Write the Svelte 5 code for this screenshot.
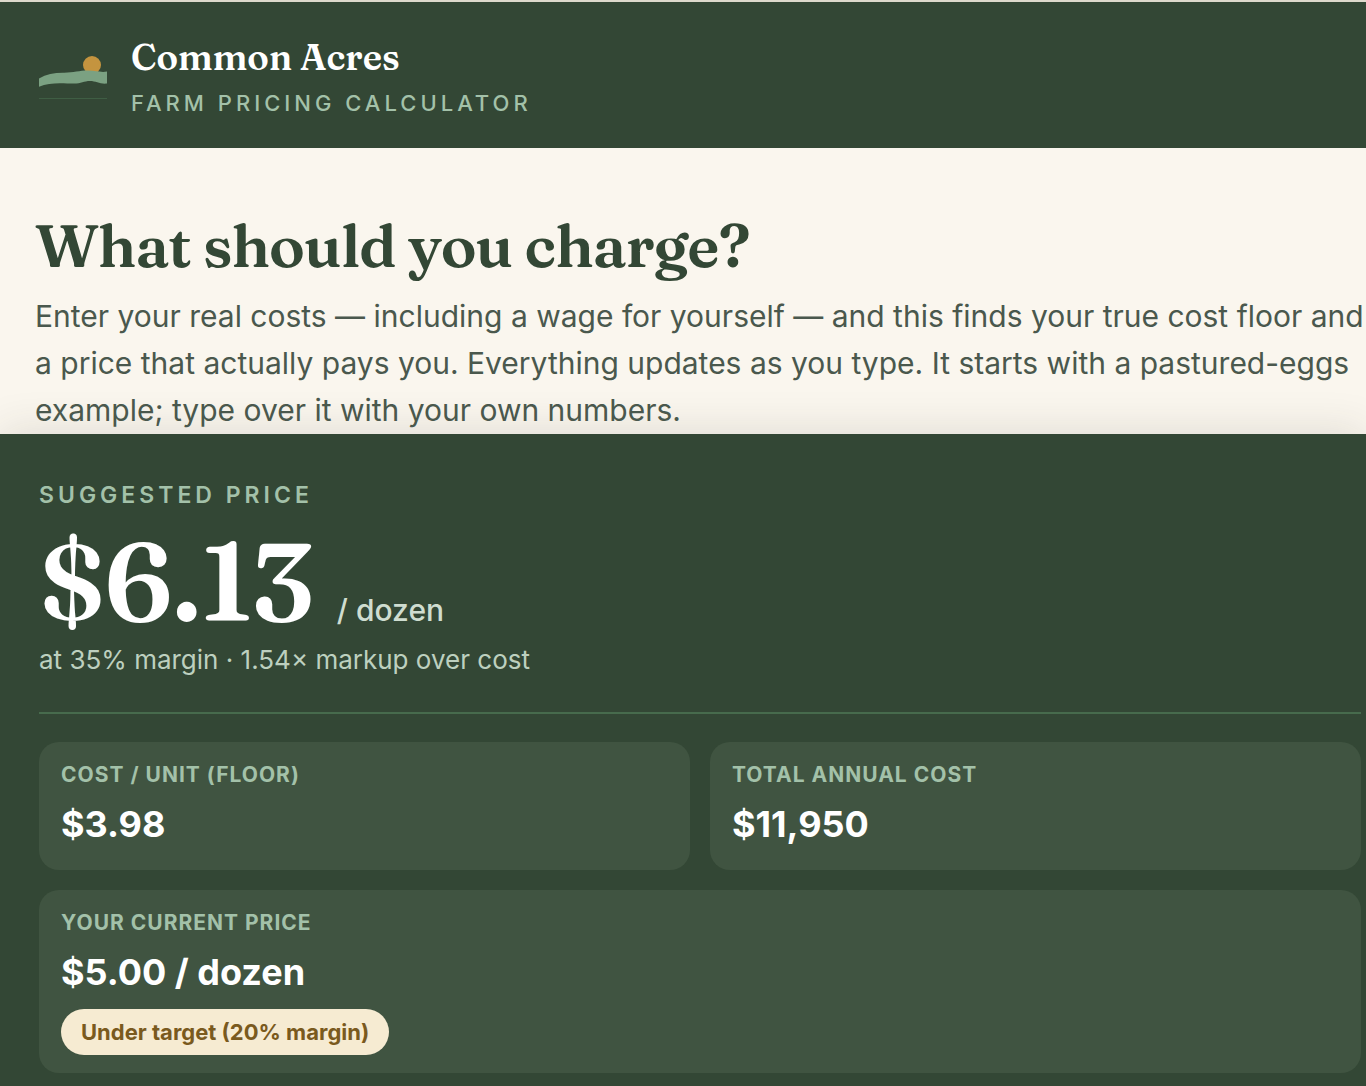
<script>
    let unit = $state('dozen');
    let unitCost = $state(3.98333);
    let annualCost = $state(11950);
    let margin = $state(35);
    let currentPrice = $state(5);

    let suggested = $derived(unitCost / (1 - margin / 100));
    let markup = $derived(suggested / unitCost);
    let currentMargin = $derived(Math.round((1 - unitCost / currentPrice) * 100));

    function money(value, digits = 2) {
        return '$' + value.toLocaleString('en-US', {
            minimumFractionDigits: digits,
            maximumFractionDigits: digits
        });
    }
</script>

<div class="page">
    <header class="topbar">
        <svg class="logo" viewBox="0 0 68 68" aria-hidden="true">
            <circle cx="53" cy="23" r="9" fill="#c4943f" />
            <path
                d="M0 36.5C7 32.5 15 30.8 24 30.8C34 31 40 28.6 49 28.6C57 28.6 61 30.6 68 29.6V41.6C61 42.4 57 39 51 39C45 39 42 41.6 35 41.6C25 41.6 11 39.8 0 44.8Z"
                fill="#7ba182"
            />
            <path d="M0 56.5H68" stroke="#3f5e44" stroke-width="1" />
        </svg>
        <div>
            <div class="brand">Common Acres</div>
            <div class="tagline">Farm Pricing Calculator</div>
        </div>
    </header>

    <main>
        <section class="intro">
            <h1>What should you charge?</h1>
            <p>
                Enter your real costs — including a wage for yourself — and this finds your true
                cost floor and a price that actually pays you. Everything updates as you type. It
                starts with a pastured-eggs example; type over it with your own numbers.
            </p>
        </section>

        <section class="results">
            <h2>Suggested price</h2>
            <div class="price">
                <span class="amount">{money(suggested)}</span>
                <span class="per">/ {unit}</span>
            </div>
            <p class="detail">at {margin}% margin · {markup.toFixed(2)}× markup over cost</p>

            <dl class="stats">
                <div class="stat">
                    <dt>Cost / unit (floor)</dt>
                    <dd>{money(unitCost)}</dd>
                </div>
                <div class="stat">
                    <dt>Total annual cost</dt>
                    <dd>{money(annualCost, 0)}</dd>
                </div>
                <div class="stat wide">
                    <dt>Your current price</dt>
                    <dd>{money(currentPrice)} / {unit}</dd>
                    <dd class="badge">Under target ({currentMargin}% margin)</dd>
                </div>
            </dl>
        </section>
    </main>
</div>

<style>
    :global(body) {
        margin: 0;
        background: #faf6ee;
    }

    .page {
        font-family: Inter, 'Liberation Sans', sans-serif;
        color: #4a584d;
        border-top: 2px solid #ded9cc;
    }

    .topbar {
        display: flex;
        align-items: center;
        gap: 24px;
        padding: 33px 39px 31px;
        background: #334735;
    }

    .logo {
        width: 68px;
        height: 68px;
        flex-shrink: 0;
    }

    .brand {
        font-family: Fraunces, 'Liberation Serif', serif;
        font-size: 36px;
        font-weight: 600;
        line-height: 44px;
        color: #fff;
    }

    .tagline {
        margin-top: 10px;
        font-size: 22px;
        font-weight: 500;
        line-height: 28px;
        letter-spacing: 4px;
        text-transform: uppercase;
        color: #a3c1a9;
    }

    .intro {
        padding: 61px 0 0 35px;
    }

    h1 {
        margin: 0 0 12px;
        font-family: Fraunces, 'Liberation Serif', serif;
        font-size: 60px;
        font-weight: 600;
        line-height: 72px;
        letter-spacing: -1px;
        color: #334735;
    }

    .intro p {
        margin: 0;
        font-size: 30px;
        line-height: 47px;
    }

    .results {
        padding: 47px 5px 13px 39px;
        background: #334735;
        box-shadow: 0 -4px 40px rgba(51, 51, 40, 0.12);
    }

    h2 {
        margin: 0;
        font-size: 23px;
        font-weight: 600;
        line-height: 28px;
        letter-spacing: 4px;
        text-transform: uppercase;
        color: #a3c1a9;
    }

    .price {
        display: flex;
        align-items: baseline;
        gap: 24px;
        margin-top: 14px;
    }

    .amount {
        font-family: Fraunces, 'Liberation Serif', serif;
        font-size: 110px;
        font-weight: 600;
        line-height: 116px;
        letter-spacing: -1px;
        color: #fff;
    }

    .per {
        font-size: 30px;
        font-weight: 500;
        color: #cfddd0;
    }

    .detail {
        margin: 5px 0 0;
        font-size: 26px;
        line-height: 32px;
        color: #bdd0bf;
    }

    .stats {
        display: grid;
        grid-template-columns: 1fr 1fr;
        gap: 20px;
        margin: 36px 0 0;
        padding-top: 28px;
        border-top: 2px solid #476b4d;
    }

    .stat {
        box-sizing: border-box;
        min-height: 128px;
        padding: 19px 22px 18px;
        border-radius: 20px;
        background: #405441;
    }

    .stat.wide {
        grid-column: 1 / -1;
    }

    dt {
        font-size: 21px;
        font-weight: 700;
        line-height: 28px;
        letter-spacing: 1px;
        text-transform: uppercase;
        color: #a3c1a9;
    }

    dd {
        margin: 13px 0 0;
        font-size: 36px;
        font-weight: 700;
        line-height: 44px;
        color: #fff;
    }

    dd.badge {
        width: fit-content;
        margin-top: 15px;
        padding: 0 20px;
        border-radius: 23px;
        background: #f6ebd2;
        font-size: 22px;
        line-height: 46px;
        color: #7a5a1e;
    }
</style>
